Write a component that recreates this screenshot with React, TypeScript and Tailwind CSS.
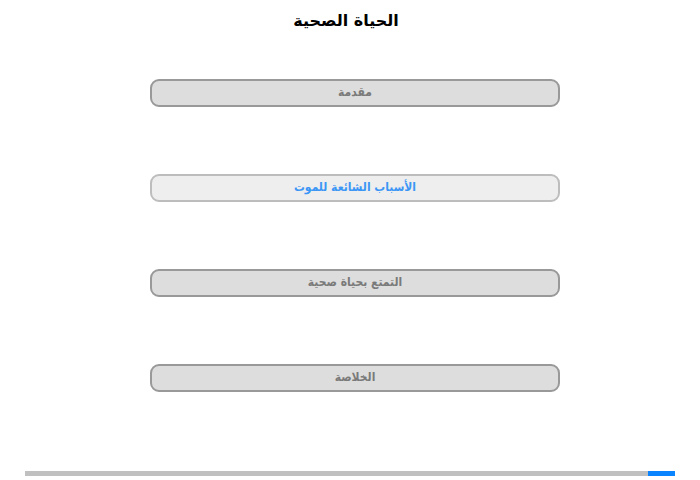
import React from "react";

const items = [
  { label: "مقدمة", active: false },
  { label: "الأسباب الشائعة للموت", active: true },
  { label: "التمتع بحياة صحية", active: false },
  { label: "الخلاصة", active: false },
];

export default function App() {
  return (
    <div
      dir="rtl"
      className="w-[700px] h-[480px] bg-white flex flex-col items-center"
      style={{ fontFamily: '"DejaVu Sans", "Liberation Sans", Arial, sans-serif' }}
    >
      <h1 className="mt-[10px] mr-[8px] h-[22px] text-[16px] leading-[22px] font-bold text-black">
        الحياة الصحية
      </h1>
      <div className="mt-[47px] ml-[10px] flex flex-col gap-[67px] w-[410px]">
        {items.map((it) => (
          <div
            key={it.label}
            style={{ fontFamily: '"DejaVu Sans Condensed", "DejaVu Sans", sans-serif' }}
            className={
              it.active
                ? "h-[28px] pb-[2px] rounded-[9px] border-2 border-[#bdbdbd] bg-[#eeeeee] flex items-center justify-center text-[12px] font-bold text-[#3c96f5]"
                : "h-[28px] pb-[2px] rounded-[9px] border-2 border-[#999999] bg-[#dddddd] flex items-center justify-center text-[12px] font-bold text-[#7a7a7a]"
            }
          >
            {it.label}
          </div>
        ))}
      </div>
      <div className="mt-auto mb-[4px] w-[650px] h-[5px] flex" dir="ltr">
        <div className="flex-1 bg-[#c0c0c0]" />
        <div className="w-[27px] bg-[#0a84ff]" />
      </div>
    </div>
  );
}
